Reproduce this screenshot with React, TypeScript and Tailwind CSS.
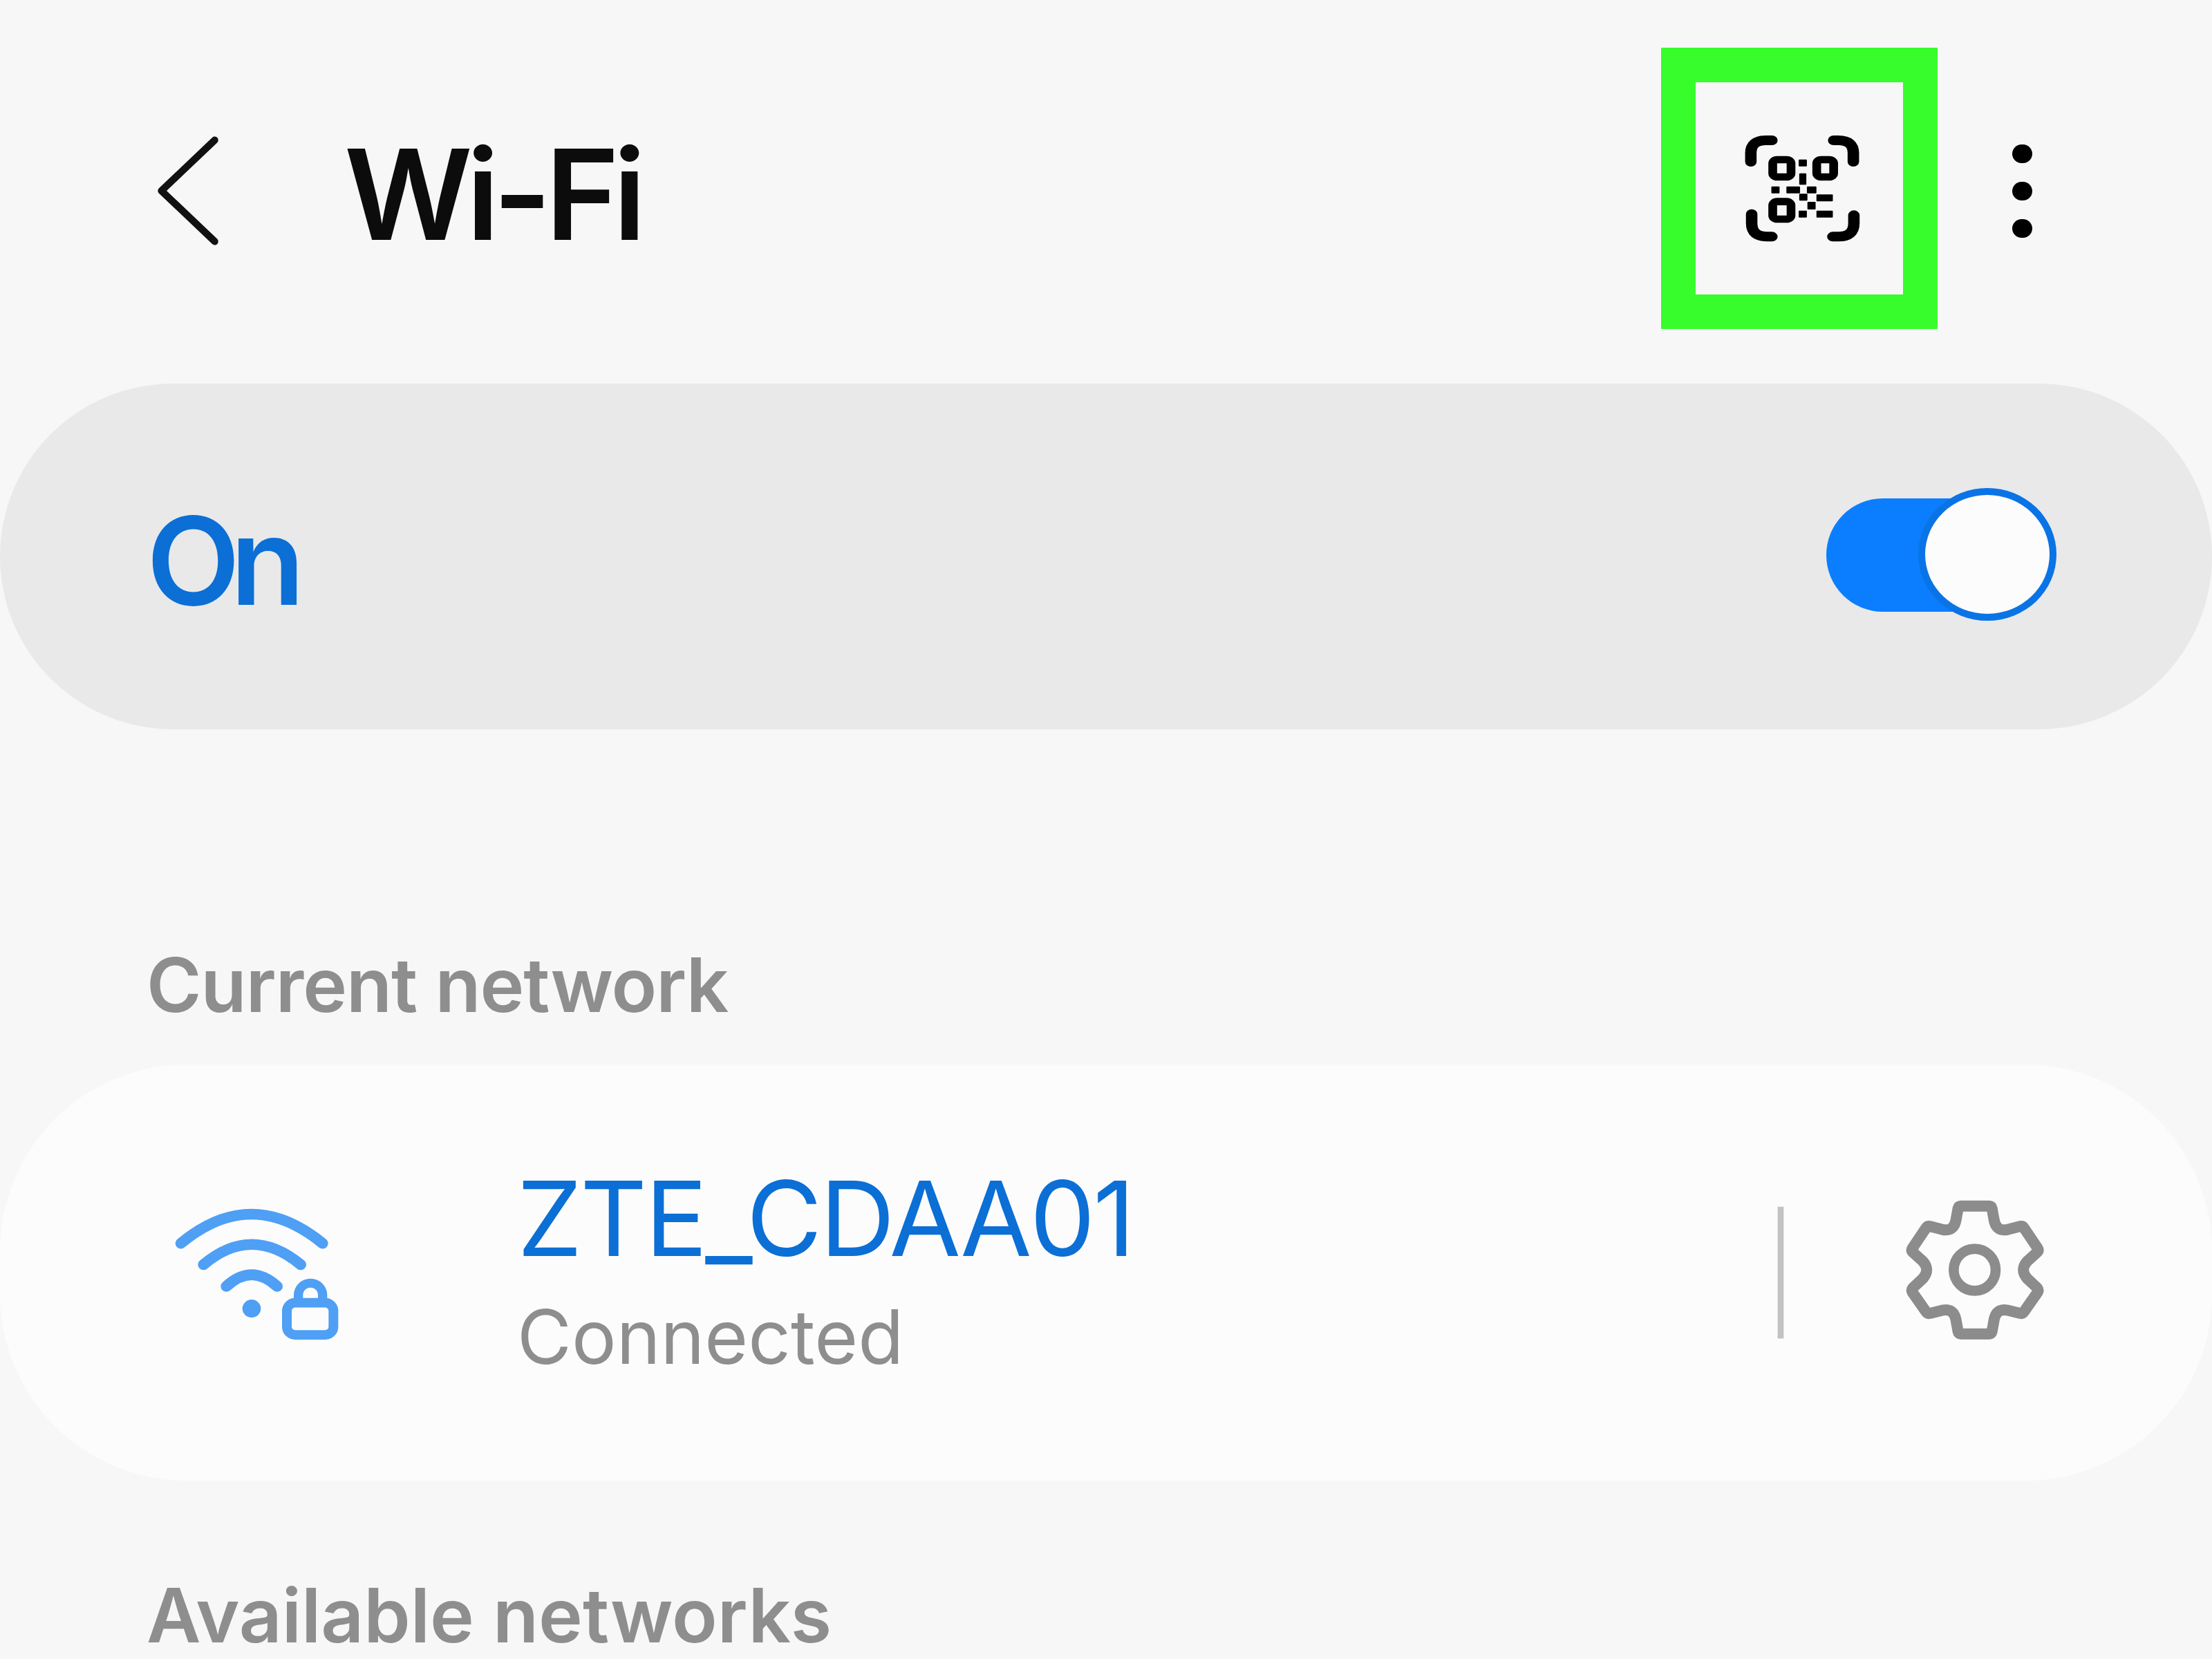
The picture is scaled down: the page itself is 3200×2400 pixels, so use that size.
const font = "font-['Inter','Liberation_Sans',sans-serif]";

function BackIcon() {
    return (
        <svg width="94" height="162" viewBox="0 0 100 172" fill="none" className="shrink-0 mt-[6px]">
            <path d="M90 8 L8 86 L90 164" stroke="#111" strokeWidth="11" strokeLinecap="round" strokeLinejoin="round" />
        </svg>
    );
}

function QrIcon() {
    const cells = [
        [560, 548, 30, 30],
        [562, 608, 26, 50],
        [460, 665, 30, 30],
        [515, 665, 50, 30],
        [590, 665, 35, 30],
        [562, 697, 30, 30],
        [625, 700, 60, 30],
        [592, 732, 30, 33],
        [560, 770, 30, 30],
        [625, 770, 60, 30],
    ];
    return (
        <svg width="170" height="160" viewBox="360 435 430 480" preserveAspectRatio="none" fill="none" className="ml-[10px]">
            <g stroke="#000" strokeWidth="42" strokeLinecap="round">
                <path d="M385 558 V520 Q385 465 440 465 H462" />
                <path d="M688 465 H705 Q760 465 760 520 V558" />
                <path d="M388 785 V825 Q388 883 445 883 H462" />
                <path d="M762 790 V825 Q762 883 705 883 H685" />
            </g>
            <g stroke="#000" strokeWidth="32">
                <rect x="465" y="549" width="67" height="75" rx="16" />
                <rect x="626" y="549" width="62" height="75" rx="16" />
                <rect x="465" y="731" width="67" height="76" rx="16" />
            </g>
            {cells.map(([x, y, w, h]) => (
                <rect key={`${x}-${y}`} x={x} y={y} width={w} height={h} rx="3" fill="#000" />
            ))}
        </svg>
    );
}

function WifiLockIcon() {
    return (
        <svg width="340" height="292" viewBox="0 0 1020 900" preserveAspectRatio="none" fill="none" className="shrink-0 -mt-[10px]">
            <g stroke="#4f9ff5" strokeLinecap="round">
                <path d="M185 335 Q490 75 800 335" strokeWidth="48" />
                <path d="M283 430 Q492 250 705 430" strokeWidth="48" />
                <path d="M382 527 Q492 423 603 527" strokeWidth="48" />
                <path d="M695 590 V565 A52 52 0 0 1 800 565 V590" strokeWidth="40" />
            </g>
            <circle cx="492" cy="626" r="40" fill="#4f9ff5" />
            <rect x="645" y="600" width="202" height="143" rx="36" stroke="#4f9ff5" strokeWidth="42" />
        </svg>
    );
}

function GearIcon() {
    return (
        <svg width="500" height="260" viewBox="0 0 1500 780" fill="none" className="shrink-0">
            <rect x="215" y="128" width="26" height="572" fill="#c2c2c2" />
            <path
                d="M1010 125 H1133 Q1143 125 1145 135 L1155 190 Q1165 235 1210 228 L1268 213 Q1278 211 1284 220 L1343 308 Q1349 318 1341 326 L1298 365 Q1265 402 1298 440 L1341 480 Q1349 490 1343 500 L1284 584 Q1278 593 1268 591 L1210 577 Q1165 570 1155 615 L1145 670 Q1143 680 1133 680 H1010 Q1000 680 998 670 L988 615 Q978 570 933 577 L875 591 Q865 593 859 584 L800 500 Q794 490 802 480 L845 440 Q878 402 845 365 L802 326 Q794 318 800 308 L859 220 Q865 211 875 213 L933 228 Q978 235 988 190 L998 135 Q1000 125 1010 125 Z"
                stroke="#8c8c8c"
                strokeWidth="48"
                strokeLinejoin="round"
            />
            <circle cx="1070" cy="402" r="91" stroke="#8c8c8c" strokeWidth="44" />
        </svg>
    );
}

export default function App() {
    return (
        <div className={`w-[3200px] h-[2400px] overflow-hidden bg-[#f7f7f7] ${font}`}>
            <header className="flex items-center h-[407px] mt-[69px] pl-[226px]">
                <BackIcon />
                <h1 className="ml-[178px] mt-[16px] text-[182px] leading-none font-semibold tracking-[-9px] text-[#0c0c0c]">Wi-Fi</h1>
                <div className="ml-auto flex items-center justify-center w-[400px] h-[407px] border-[50px] border-[#37fd2c]">
                    <QrIcon />
                </div>
                <div className="ml-[108px] mr-[260px] flex flex-col gap-[27px] pt-[8px]">
                    <span className="block w-[29px] h-[27px] rounded-full bg-black" />
                    <span className="block w-[29px] h-[27px] rounded-full bg-black" />
                    <span className="block w-[29px] h-[27px] rounded-full bg-black" />
                </div>
            </header>

            <section className="mt-[79px] h-[500px] rounded-[250px] bg-[#e9e9e9] flex items-center justify-between pl-[212px] pr-[240px]">
                <span className="text-[176px] leading-none font-semibold tracking-[-14px] text-[#0b6fd6] mt-[12px]">On</span>
                <div className="relative w-[318px] h-[164px] rounded-full bg-[#0a7eff] -mt-[4px]">
                    <span className="absolute -right-[15px] -top-[15px] w-[200px] h-[192px] rounded-[50%] bg-[#fcfcfc] border-[10px] border-[#0a74e6]" />
                </div>
            </section>

            <h2 className="mt-[310px] pl-[212px] text-[108px] leading-[120px] font-semibold tracking-[-1px] text-[#8e8e8e]">Current network</h2>

            <section className="mt-[55px] h-[602px] rounded-[270px] bg-[#fcfcfc] flex items-center pl-[200px] pr-[200px]">
                <WifiLockIcon />
                <div className="ml-[208px] flex flex-col mt-[10px]">
                    <span className="text-[150px] leading-[170px] tracking-[-3px] text-[#0b6fd6]">ZTE_CDAA01</span>
                    <span className="text-[108px] leading-[160px] text-[#8e8e8e] mt-[6px]">Connected</span>
                </div>
                <div className="ml-auto -mt-[16px]">
                    <GearIcon />
                </div>
            </section>

            <h2 className="mt-[145px] pl-[212px] text-[108px] leading-[100px] font-semibold text-[#8e8e8e]">Available networks</h2>
        </div>
    );
}
